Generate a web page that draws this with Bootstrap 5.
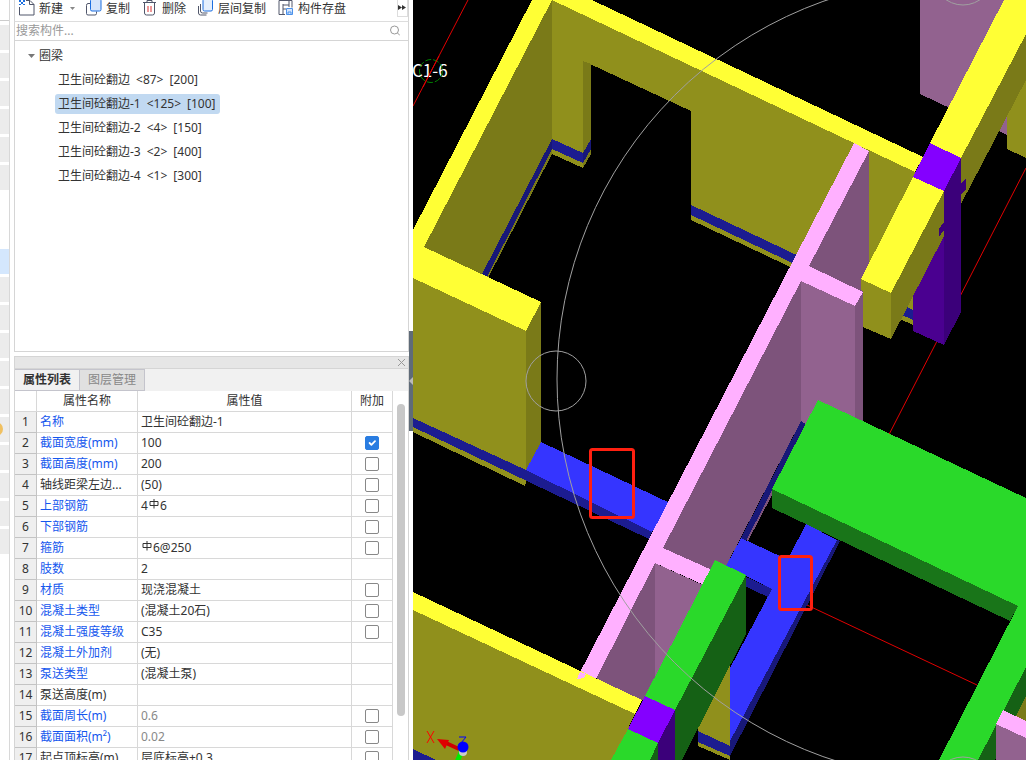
<!DOCTYPE html>
<html lang="zh-CN">
<head>
<meta charset="utf-8">
<meta name="viewport" content="width=device-width, initial-scale=1">
<title>构件列表</title>
<link href="https://cdn.jsdelivr.net/npm/bootstrap@5.3.0/dist/css/bootstrap.min.css" rel="stylesheet">
<style>
body{font-family:"Noto Sans","Noto Sans CJK SC",sans-serif;font-size:12px;line-height:20px;color:#333;background:#fff}
button,input{font:inherit;color:inherit}
.strip{width:10px;border-right:1px solid #d8d8d8;padding-top:20px}
.strip hr{margin:0 0 4px;border-color:#ccc;opacity:1}
.strip i{display:block;height:25px;margin-bottom:3px;background:#ececec}
.strip .blank{height:53px;background:none}
.strip .sel{background:#d4e7fd}
.strip .dot{overflow:hidden}
.strip .dot::after{content:"";display:block;width:14px;height:14px;margin:5px 0 0 -11px;border-radius:50%;background:#f0c060}
.dock{width:395px;margin-left:4px}
.edge{border:1px solid #d5d5d5}
.tools{height:22px;border-bottom:1px solid #ddd;padding-left:4px}
.tools button{background:none;border:0;padding:0;height:18px;line-height:18px;display:flex;align-items:flex-start}
.tools svg{flex:none}
.tools .more{width:11px;height:17px;border:1px solid #ddd;border-top:0}
.search{height:19px}
.search input{border:0;outline:0;padding:1px 1px 0;font-size:12px;background:none}
.search input::placeholder{color:#999;opacity:1}
.tree{height:311px;padding:5px 0 0 40px}
.tree button{border:0;background:none;display:flex;gap:6px;height:20px;line-height:20px;padding:0 3px;margin-bottom:4px;border-radius:3px;white-space:nowrap}
.tree .root{margin-left:-30px;gap:3px}
.tree .on{background:#c1d9f1;padding-right:4px}
.grip{height:13px;margin-top:4px;background:#e6e6e6}
.grip button{border:0;background:none;padding:0;width:14px;line-height:0}
.tabs{height:22px;background:#f1f1f1}
.tabs button{border:1px solid #c4c4cc;border-left:0;padding:0 8px;background:#e0e0e0;color:#888;height:22px;line-height:20px}
.tabs .active{font-weight:700;color:#333;background:#f1f1f1}
.grid{width:378px;table-layout:fixed;border-collapse:separate;border-spacing:0;margin:0}
.grid .c-no{width:22px}
.grid .c-name{width:101px}
.grid .c-value{width:214px}
.grid .c-add{width:41px}
.grid th,.grid td{height:21px;padding:0 3px;line-height:20px;border-right:1px solid #d8d8d8;border-bottom:1px solid #d8d8d8;white-space:nowrap;overflow:hidden;text-overflow:ellipsis}
.grid thead th{font-weight:400;text-align:center}
.grid tbody th{font-weight:400;text-align:center;padding:0;background:#efefef;border-color:#c4c4c4}
.grid tbody td:nth-child(2){color:#1557ee}
.grid tbody .plain td:nth-child(2){color:#333}
.grid td:last-child{text-align:center;padding:0;line-height:0}
.grid .dim td:nth-child(3){color:#888}
.grid .form-check-input{width:14px;height:14px;margin:0;border:1px solid #888;border-radius:2px;vertical-align:middle}
.grid .form-check-input:checked{background-color:#2a7de1;border-color:#2a7de1}
.rebar{vertical-align:1px;margin-left:1px}
.bar{width:8px;height:312px;margin:13px 0 0 4px;border-radius:4px;background:#c8c8c8}
.split{width:4px}
.split button{height:100px;width:4px;background:#5f6b78;border:0;padding:0;margin-top:331px;line-height:0}
.view{background:#000;min-width:0}
</style>
</head>
<body>
<main class="d-flex vh-100 overflow-hidden">
<div class="strip flex-shrink-0"><hr><i></i><i></i><i></i><i></i><i></i><i></i><i class="blank"></i><i class="sel"></i><i></i><i></i><i></i><i></i><i></i><i class="dot"></i><i></i><i></i><i></i><i></i></div>
<section class="dock flex-shrink-0 d-flex flex-column">
<div class="tools edge border-top-0 d-flex">
<button><svg width="16" height="17" viewBox="0 0 16 17"><path d="M7 .5h4l4 4v10.500h-14.500v-8" fill="none" stroke="#50566a"/><path d="M10.500 0v4.500h4.500" fill="none" stroke="#50566a"/><path d="M0 0h2v2h-2zM4 0h2v2h-2zM2 2h2v2h-2zM0 4h2v1h-2zM4 4h2v1h-2z" fill="#1c6fe0"/></svg><span class="ms-1">新建</span><svg class="ms-1" width="11" height="12"><path d="M3 7h5l-2.500 3z" fill="#888"/></svg></button>
<button class="ms-2"><svg width="16" height="17"><path d="M4 3.500h-2q-1.500 0-1.500 2v8q0 1.500 1.500 1.500h7q1.500 0 1.500-1.500v-2" fill="none" stroke="#50566a"/><rect x="4.500" y="-1" width="10.500" height="12" rx="1.500" fill="#d5e5fb" stroke="#1c6fe0"/></svg><span class="ms-1">复制</span></button>
<button class="ms-2 ps-1"><svg width="16" height="17"><path d="M1 2.500h13M5 2v-1.500h5v1.500M2.500 3v10q0 2 2 2h6q2 0 2-2v-10" fill="none" stroke="#50566a"/><path d="M6 6v6M9 6v6" stroke="#d33"/></svg><span class="ms-1">删除</span></button>
<button class="ms-2 ps-1"><svg width="16" height="17"><path d="M.5 6v7q0 2 2 2h6M2.500 4v7q0 2 2 2h5" fill="none" stroke="#50566a"/><rect x="5" y="-1" width="9.500" height="12" rx="1.500" fill="#e5effc" stroke="#1c6fe0"/></svg><span class="ms-1">层间复制</span></button>
<button class="ms-2 ps-1"><svg width="16" height="17"><path d="M7 14.500h-6v-14h13v7M5 14v-10M5 5h6M11 1v6M5 9h3" fill="none" stroke="#50566a"/><path d="M8.500 8.500h6v6h-6zM10 14v-2h3v2" fill="#d5e5fb" stroke="#4b91ea"/></svg><span class="ms-1">构件存盘</span></button>
<button class="more ms-auto" aria-label="更多"><svg width="9" height="14"><path d="M0 5l4 2.500-4 2.500zM4 5l4 2.500-4 2.500z" fill="#333"/></svg></button>
</div>
<div class="search edge border-top-0 d-flex align-items-center"><input class="flex-grow-1" type="text" placeholder="搜索构件..." aria-label="搜索构件"><svg class="me-2" width="10" height="11"><circle cx="4.500" cy="5" r="4" fill="none" stroke="#999"/><path d="M7.500 8l2.500 2.500" stroke="#999"/></svg></div>
<div class="tree edge border-top-0 flex-shrink-0">
<button class="root"><svg width="8" height="20"><path d="M0 8h7l-3.500 4z" fill="#777"/></svg>圈梁</button>
<button>卫生间砼翻边 <span>&lt;87&gt;</span> <span>[200]</span></button>
<button class="on">卫生间砼翻边-1 <span>&lt;125&gt;</span> <span>[100]</span></button>
<button>卫生间砼翻边-2 <span>&lt;4&gt;</span> <span>[150]</span></button>
<button>卫生间砼翻边-3 <span>&lt;2&gt;</span> <span>[400]</span></button>
<button>卫生间砼翻边-4 <span>&lt;1&gt;</span> <span>[300]</span></button>
</div>
<div class="grip edge d-flex justify-content-end flex-shrink-0"><button aria-label="关闭"><svg width="9" height="9"><path d="M1 1l7 7M8 1l-7 7" stroke="#999"/></svg></button></div>
<div class="tabs edge border-top-0 border-bottom-0 d-flex flex-shrink-0" role="tablist"><button class="active" role="tab">属性列表</button><button role="tab">图层管理</button></div>
<div class="edge border-top-0 border-bottom-0 d-flex flex-grow-1 overflow-hidden">
<table class="grid flex-shrink-0">
<colgroup><col class="c-no"><col class="c-name"><col class="c-value"><col class="c-add"></colgroup>
<thead><tr><th></th><th>属性名称</th><th>属性值</th><th>附加</th></tr></thead>
<tbody>
<tr><th>1</th><td>名称</td><td>卫生间砼翻边-1</td><td></td></tr>
<tr><th>2</th><td>截面宽度(mm)</td><td>100</td><td><input class="form-check-input" type="checkbox" aria-label="附加 截面宽度" checked></td></tr>
<tr><th>3</th><td>截面高度(mm)</td><td>200</td><td><input class="form-check-input" type="checkbox" aria-label="附加 截面高度"></td></tr>
<tr class="plain"><th>4</th><td>轴线距梁左边...</td><td>(50)</td><td><input class="form-check-input" type="checkbox" aria-label="附加 轴线距梁左边"></td></tr>
<tr><th>5</th><td>上部钢筋</td><td>4<svg class="rebar" width="11" height="10"><path d="M1 2.500h8v4h-8zM5 0v9.500" fill="none" stroke="#333"/></svg>6</td><td><input class="form-check-input" type="checkbox" aria-label="附加 上部钢筋"></td></tr>
<tr><th>6</th><td>下部钢筋</td><td></td><td><input class="form-check-input" type="checkbox" aria-label="附加 下部钢筋"></td></tr>
<tr><th>7</th><td>箍筋</td><td><svg class="rebar" width="11" height="10"><path d="M1 2.500h8v4h-8zM5 0v9.500" fill="none" stroke="#333"/></svg>6@250</td><td><input class="form-check-input" type="checkbox" aria-label="附加 箍筋"></td></tr>
<tr><th>8</th><td>肢数</td><td>2</td><td></td></tr>
<tr><th>9</th><td>材质</td><td>现浇混凝土</td><td><input class="form-check-input" type="checkbox" aria-label="附加 材质"></td></tr>
<tr><th>10</th><td>混凝土类型</td><td>(混凝土20石)</td><td><input class="form-check-input" type="checkbox" aria-label="附加 混凝土类型"></td></tr>
<tr><th>11</th><td>混凝土强度等级</td><td>C35</td><td><input class="form-check-input" type="checkbox" aria-label="附加 混凝土强度等级"></td></tr>
<tr><th>12</th><td>混凝土外加剂</td><td>(无)</td><td></td></tr>
<tr><th>13</th><td>泵送类型</td><td>(混凝土泵)</td><td></td></tr>
<tr class="plain"><th>14</th><td>泵送高度(m)</td><td></td><td></td></tr>
<tr class="dim"><th>15</th><td>截面周长(m)</td><td>0.6</td><td><input class="form-check-input" type="checkbox" aria-label="附加 截面周长"></td></tr>
<tr class="dim"><th>16</th><td>截面面积(m²)</td><td>0.02</td><td><input class="form-check-input" type="checkbox" aria-label="附加 截面面积"></td></tr>
<tr class="plain"><th>17</th><td>起点顶标高(m)</td><td>层底标高+0.3</td><td><input class="form-check-input" type="checkbox" aria-label="附加 起点顶标高"></td></tr>
</tbody>
</table>
<div class="bar flex-shrink-0"></div>
</div>
</section>
<div class="split flex-shrink-0"><button aria-label="收起面板"><svg width="4" height="8"><path d="M4 0v8l-4-4z" fill="#bbb"/></svg></button></div>
<section class="view flex-grow-1">
<svg class="d-block w-100 h-100" viewBox="413 0 613 760" preserveAspectRatio="xMinYMin slice" shape-rendering="crispEdges">
<g stroke="#e00000" shape-rendering="auto"><path d="M468 0L413 106M1026 168L880 452M807 605L977 685"/></g>
<!-- far right walls -->
<path fill="#92628f" d="M920 0h87v135L920 94z"/>
<path fill="#90901c" d="M1007 90l19-30v98l-19-9z"/>
<path fill="#7a7a18" d="M961 158L1026 34v46L961 204z"/>
<path fill="#ffff35" d="M1004 0h22v34L961 158l-31-15z"/>
<!-- back wall with door opening -->
<path fill="#90901c" d="M552 0L915 172V311L691 205V111L590 64L583 61V153L552 139z"/>
<path fill="#7a7a18" d="M583 61l8 3v75l-8 14z"/>
<path fill="#1c1c90" d="M552 139l31 14v10l-31-14zM691 205L915 311v10L691 215z"/>
<path fill="#181878" d="M583 153l8-14v10l-8 14z"/>
<path fill="#90901c" d="M552 149l31 14v5l-31-14zM691 215L915 321v5L691 220z"/>
<path fill="#7a7a18" d="M583 163l8-14v5l-8 14z"/>
<path fill="#ffff35" d="M552 0h40L923 157l-8 15z"/>
<!-- left wall -->
<path fill="#7a7a18" d="M552 0V139L482 275L424 247zM552 149v5L488 278l-3-2z"/>
<path fill="#181878" d="M552 139v10L487 277l-5-3z"/>
<path fill="#90901c" d="M413 278L526 331V470L413 418zM413 427L527 480l-2 6L413 432z"/>
<path fill="#7a7a18" d="M526 331l15-29V442l-15 28z"/>
<path fill="#ffff35" d="M532 0h20L424 247L541 302L526 331L413 278V230z"/>
<path fill="#1c1c90" d="M413 418L526 470L652 532L649 539L413 427z"/>
<path fill="#3535ff" d="M541 442L672 504L652 532L526 470z"/>
<!-- purple column -->
<path fill="#4a0090" d="M913 177l31 14v154l-31-14z"/>
<path fill="#3b007a" d="M944 191l17-33v154l-17 33zM961 184l5-6v11l-5 6z"/>
<path fill="#8400ff" d="M930 143l31 15L944 191L913 177z"/>
<!-- pink partition -->
<path fill="#7d537b" d="M869 151v144L809 266zM801 281V421L726 566L709 575L663 548zM655 563V690L641 701L596 678z"/>
<path fill="#92628f" d="M801 281L855 306V430H801zM655 563L705 586L655 682z"/>
<path fill="#7d537b" d="M855 306l8-14V430h-8z"/>
<path fill="#ffb0ff" d="M854 143l15 8L809 266L863 292L855 306L801 281L663 548L712 570L704 585L655 563L595 681L577 678z"/>
<path fill="#7d537b" d="M805 425L808 426L748 541L746 540z"/>
<path fill="#181878" d="M801 421l5 3L746 541l-5-3z"/>
<!-- yellow beam in front of the column -->
<path fill="#7a7a18" d="M944 191v45L891 339V293z"/>
<path fill="#3b007a" d="M944 222l-5 7v8l5-7z"/>
<path fill="#90901c" d="M861 279l30 14v46L863 327V292L861 290z"/>
<path fill="#ffff35" d="M913 177l31 14L891 293L861 279z"/>
<!-- bottom walls -->
<path fill="#90901c" d="M413 610L635 714L613 760H413zM698 715L730 660V746L698 731zM698 742L730 756v4L698 746z"/>
<path fill="#1c1c90" d="M413 749l23 11H413zM698 731l32 15v10l-32-14z"/>
<path fill="#ffff35" d="M413 592L642 700L635 714L413 610z"/>
<path fill="#ffb0ff" d="M580 672l6 2-2 4-7 1z"/>
<!-- blue beams -->
<path fill="#181878" d="M837 540l3 1L730 756V741z"/>
<path fill="#1c1c90" d="M740 574L772 589L768 597L740 584z"/>
<path fill="#3535ff" d="M741 538L782 557L789 557L806 524L837 540L730 741V668L772 589L726 566z"/>
<!-- green beams -->
<path fill="#2ad92a" d="M818 400L1026 498V667L978 760H939L1018 606L772 489z"/>
<path fill="#197519" d="M772 489L1018 606L1010 621L772 508z"/>
<path fill="#156115" d="M1026 667V700L995 760H978zM746 575V634L682 760H675V710zM658 743v17h-8z"/>
<path fill="#7a7a18" d="M1026 696v26l-10-6z"/>
<path fill="#92628f" d="M996 724l30 14v22H996z"/>
<path fill="#ffb0ff" d="M1003 710l23 11v17L996 724z"/>
<path fill="#2ad92a" d="M715 560L746 575L675 710L645 696zM628 729l30 14L650 760H611z"/>
<path fill="#8400ff" d="M645 696l30 14L658 743L628 729z"/>
<path fill="#3b007a" d="M675 710v50H658V743z"/>
<g fill="none" stroke="#a0a0a0" shape-rendering="auto"><circle cx="958" cy="379" r="401"/><circle cx="556" cy="381" r="30"/><circle cx="963" cy="-25" r="30"/><circle cx="963" cy="787" r="30"/></g>
<text x="412" y="77" font-size="17" fill="#fff" font-family="Noto Sans CJK SC, sans-serif">C1-6</text>
<g shape-rendering="auto"><circle cx="431" cy="71" r="11.500" fill="none" stroke="#008000" stroke-dasharray="6 2"/>
<path d="M439 56L423 87" stroke="#e00000"/>
<path d="M457 762L463 748" stroke="#0e0" stroke-width="5"/><circle cx="463" cy="752" r="4" fill="#ccc"/>
<path d="M459 749L446 743" stroke="#d00000" stroke-width="4"/><path d="M437 739l12 1-4 9z" fill="#e00000"/>
<circle cx="463" cy="747" r="5.500" fill="#00f"/>
<path d="M427 731l7 12M434 731l-7 12" stroke="#f00"/><path d="M459 737h7l-5 6" fill="none" stroke="#00f"/></g>
<g fill="none" stroke="#ff2010" stroke-width="3" shape-rendering="auto"><rect x="590.500" y="449.500" width="43" height="68" rx="2"/><rect x="779.500" y="556.500" width="32" height="53" rx="2"/></g>
</svg>
</section>
</main>
<script src="https://cdn.jsdelivr.net/npm/bootstrap@5.3.0/dist/js/bootstrap.bundle.min.js"></script>
</body>
</html>
